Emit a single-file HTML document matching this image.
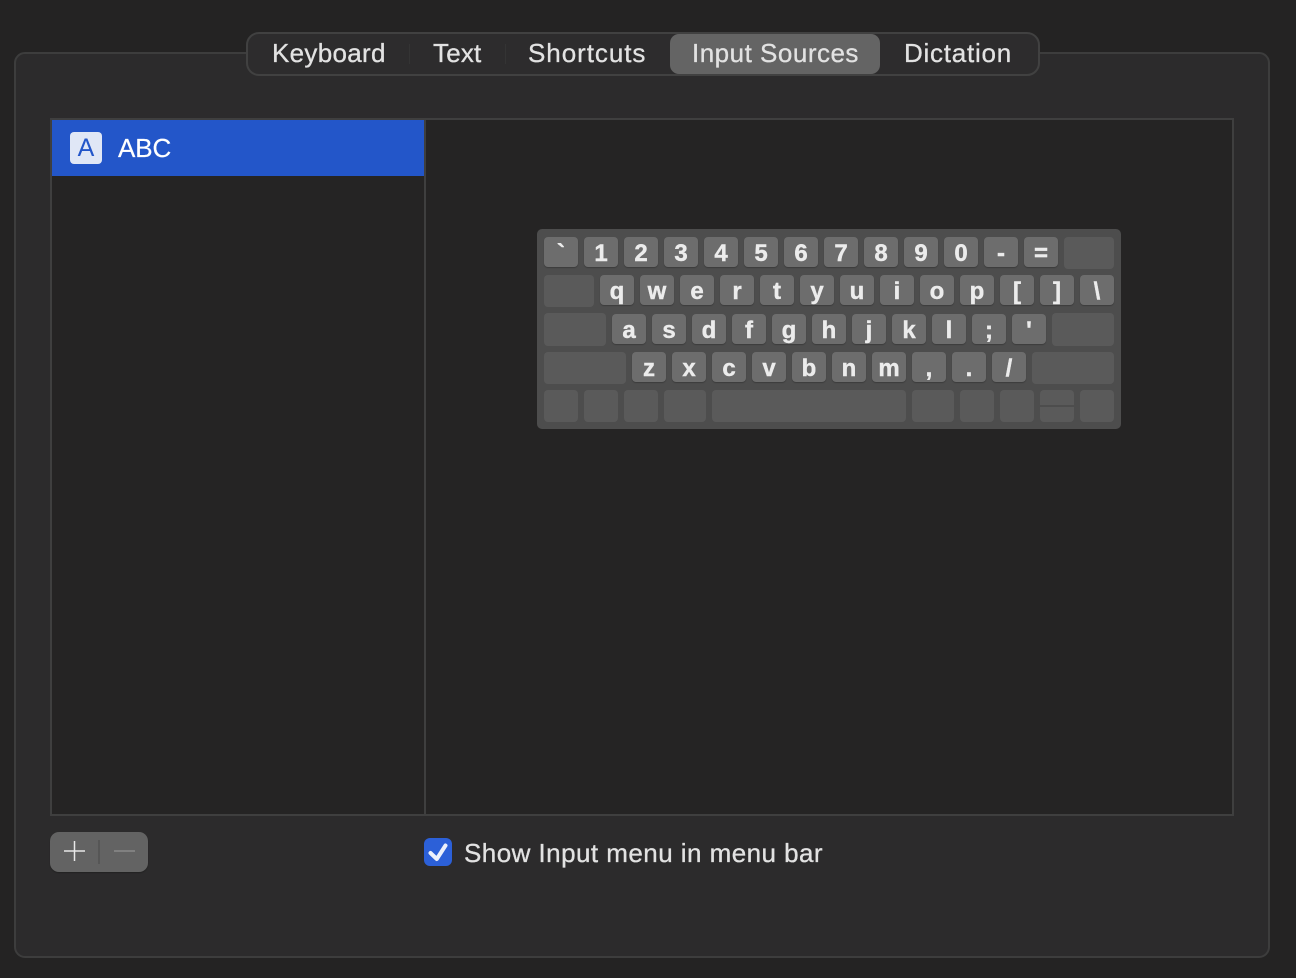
<!DOCTYPE html>
<html lang="en">
<head>
<meta charset="utf-8">
<title>Input Sources</title>
<style>
html,body{margin:0;padding:0;width:1296px;height:978px;overflow:hidden;background:#242323;font-family:"Liberation Sans",sans-serif;}
div,span{position:absolute;box-sizing:border-box;}
#panel{left:14px;top:52px;width:1256px;height:906px;background:#2c2b2c;border:2px solid #3d3d3d;border-radius:11px;}
#tabs{left:246px;top:32px;width:794px;height:44px;background:#2d2c2d;border:2px solid #414141;border-radius:13px;}
#sel{left:670px;top:34px;width:210px;height:40px;background:#646464;border-radius:9px;}
.t{top:37px;height:32px;line-height:32px;font-size:26px;color:#e2e2e2;white-space:nowrap;-webkit-text-stroke:.3px #e2e2e2;}
.sep{top:44px;width:1px;height:20px;background:#343434;}
#box{left:50px;top:118px;width:1184px;height:698px;background:#252424;border:2px solid #3f3f3f;}
#div{left:424px;top:119px;width:2px;height:696px;background:#3f3f3f;}
#row{left:52px;top:120px;width:372px;height:56px;background:#2356c9;}
#ic{left:70px;top:132px;width:32px;height:32px;background:#e0e7f6;border-radius:4px;color:#2356c9;font-size:25px;line-height:33px;text-align:center;}
#abc{left:118px;top:132px;height:32px;line-height:32px;font-size:26px;color:#fff;letter-spacing:-.1px;-webkit-text-stroke:.2px #fff;}
#kb{left:537px;top:229px;width:584px;height:200px;background:#4d4d4d;border-radius:5px;}
.k{width:34px;height:30px;background:#6d6d6d;border-radius:4px;box-shadow:0 1px 1px #3c3c3c;color:#ececec;font-weight:bold;font-size:24px;line-height:34px;text-align:center;-webkit-text-stroke:.4px #ececec;}
.b{background:#5a5a5a;border-radius:4px;}
.r1{top:237px}.r2{top:275px}.r3{top:314px}.r4{top:352px}
#btn{left:50px;top:832px;width:98px;height:40px;background:#636363;border-radius:9px;box-shadow:0 1px 1px #222;}
#cb{left:424px;top:838px;width:28px;height:28px;background:#2c60d8;border-radius:6px;}
#lbl{left:464px;top:837px;height:32px;line-height:32px;font-size:26px;color:#e2e2e2;white-space:nowrap;-webkit-text-stroke:.3px #e2e2e2;}
svg{position:absolute;left:0;top:0;}
</style>
</head>
<body>
<div id="panel"></div>
<div id="tabs"></div>
<div id="sel"></div>
<span class="t" style="left:272px;letter-spacing:.3px">Keyboard</span>
<div class="sep" style="left:409px"></div>
<span class="t" style="left:433px;letter-spacing:.2px">Text</span>
<div class="sep" style="left:505px"></div>
<span class="t" style="left:528px;letter-spacing:.95px">Shortcuts</span>
<span class="t" style="left:692px;letter-spacing:.5px">Input Sources</span>
<span class="t" style="left:904px;letter-spacing:.75px">Dictation</span>

<div id="box"></div>
<div id="div"></div>
<div id="row"></div>
<div id="ic">A</div>
<div id="abc">ABC</div>

<div id="kb"></div>
<div class="k r1" style="left:544px">`</div><div class="k r1" style="left:584px">1</div><div class="k r1" style="left:624px">2</div><div class="k r1" style="left:664px">3</div><div class="k r1" style="left:704px">4</div><div class="k r1" style="left:744px">5</div><div class="k r1" style="left:784px">6</div><div class="k r1" style="left:824px">7</div><div class="k r1" style="left:864px">8</div><div class="k r1" style="left:904px">9</div><div class="k r1" style="left:944px">0</div><div class="k r1" style="left:984px">-</div><div class="k r1" style="left:1024px">=</div>
<div class="b r1" style="left:1064px;width:50px;height:32px"></div>

<div class="b r2" style="left:544px;width:50px;height:32px"></div>
<div class="k r2" style="left:600px">q</div><div class="k r2" style="left:640px">w</div><div class="k r2" style="left:680px">e</div><div class="k r2" style="left:720px">r</div><div class="k r2" style="left:760px">t</div><div class="k r2" style="left:800px">y</div><div class="k r2" style="left:840px">u</div><div class="k r2" style="left:880px">i</div><div class="k r2" style="left:920px">o</div><div class="k r2" style="left:960px">p</div><div class="k r2" style="left:1000px">[</div><div class="k r2" style="left:1040px">]</div><div class="k r2" style="left:1080px">\</div>

<div class="b r3" style="left:544px;width:62px;height:33px;top:313px"></div>
<div class="k r3" style="left:612px">a</div><div class="k r3" style="left:652px">s</div><div class="k r3" style="left:692px">d</div><div class="k r3" style="left:732px">f</div><div class="k r3" style="left:772px">g</div><div class="k r3" style="left:812px">h</div><div class="k r3" style="left:852px">j</div><div class="k r3" style="left:892px">k</div><div class="k r3" style="left:932px">l</div><div class="k r3" style="left:972px">;</div><div class="k r3" style="left:1012px">'</div>
<div class="b r3" style="left:1052px;width:62px;height:33px;top:313px"></div>

<div class="b r4" style="left:544px;width:82px;height:32px"></div>
<div class="k r4" style="left:632px">z</div><div class="k r4" style="left:672px">x</div><div class="k r4" style="left:712px">c</div><div class="k r4" style="left:752px">v</div><div class="k r4" style="left:792px">b</div><div class="k r4" style="left:832px">n</div><div class="k r4" style="left:872px">m</div><div class="k r4" style="left:912px">,</div><div class="k r4" style="left:952px">.</div><div class="k r4" style="left:992px">/</div>
<div class="b r4" style="left:1032px;width:82px;height:32px"></div>

<div class="b" style="left:544px;top:390px;width:34px;height:32px"></div>
<div class="b" style="left:584px;top:390px;width:34px;height:32px"></div>
<div class="b" style="left:624px;top:390px;width:34px;height:32px"></div>
<div class="b" style="left:664px;top:390px;width:42px;height:32px"></div>
<div class="b" style="left:712px;top:390px;width:194px;height:32px"></div>
<div class="b" style="left:912px;top:390px;width:42px;height:32px"></div>
<div class="b" style="left:960px;top:390px;width:34px;height:32px"></div>
<div class="b" style="left:1000px;top:390px;width:34px;height:32px"></div>
<div class="b" style="left:1040px;top:390px;width:34px;height:32px"></div>
<div style="left:1040px;top:405px;width:34px;height:2px;background:#4d4d4d"></div>
<div class="b" style="left:1080px;top:390px;width:34px;height:32px"></div>

<div id="btn"></div>
<div id="cb"></div>
<svg width="1296" height="978" viewBox="0 0 1296 978">
<path d="M74.500 841V861M64 851H85" stroke="#e8e8e8" stroke-width="1.500" fill="none"/>
<path d="M99 840V864" stroke="#525252" stroke-width="1.500" fill="none"/>
<path d="M114 851H135" stroke="#8a8a8a" stroke-width="1.500" fill="none"/>
<path d="M430.500 853L436.800 859L445.500 845.500" stroke="#ecf0fb" stroke-width="4" fill="none" stroke-linecap="round" stroke-linejoin="round"/>
</svg>
<div id="lbl" style="letter-spacing:.45px">Show Input menu in menu bar</div>
</body>
</html>
